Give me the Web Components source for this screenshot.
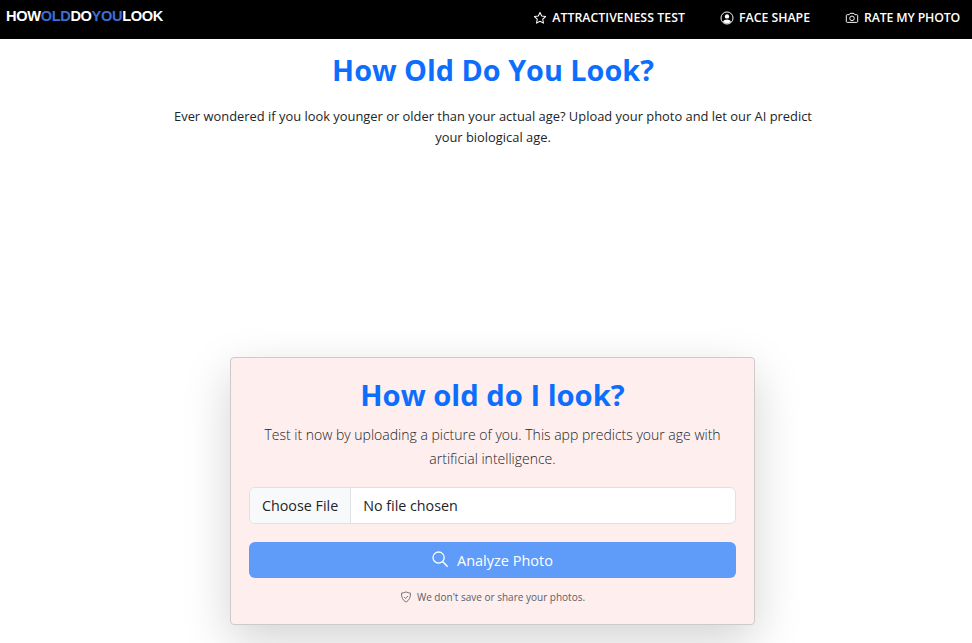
<!DOCTYPE html>
<html lang="en">
<head>
<meta charset="utf-8">
<title>How Old Do You Look?</title>
<style>
  html, body { margin: 0; padding: 0; background: #fff; }
  body { font-family: "Open Sans", "Noto Sans", sans-serif; overflow: hidden; height: 643px; }
</style>
</head>
<body>
<site-nav>
  <nav-link icon="star" style="letter-spacing: .05px">ATTRACTIVENESS TEST</nav-link>
  <nav-link icon="person">FACE SHAPE</nav-link>
  <nav-link icon="camera" style="letter-spacing: -.15px">RATE MY PHOTO</nav-link>
</site-nav>
<page-intro heading="How Old Do You Look?">
  Ever wondered if you look younger or older than your actual age? Upload your photo and let our AI predict your biological age.
</page-intro>
<upload-card heading="How old do I look?">
  Test it now by uploading a picture of you. This app predicts your age with artificial intelligence.
</upload-card>

<script>
const ICONS = {
  star: `<path d="M8 1.6l1.95 4.1 4.45.6-3.25 3.1.8 4.5L8 11.75 4.05 13.9l.8-4.5L1.6 6.3l4.45-.6z" fill="none" stroke="currentColor" stroke-width="1.2" stroke-linejoin="round"/>`,
  person: `<circle cx="8" cy="8" r="6.9" fill="none" stroke="currentColor" stroke-width="1.1"/><circle cx="8" cy="6.2" r="2.5" fill="currentColor"/><path d="M3.4 12.4C4.2 10.6 6 9.8 8 9.8s3.800.8 4.600 2.600A6.300 6.300 0 0 1 8 14.400a6.300 6.300 0 0 1-4.600-2z" fill="currentColor"/>`,
  camera: `<path d="M1.500 5.200c0-.6.500-1 1-1h2.300l1-1.500h4.400l1 1.500h2.300c.5 0 1 .4 1 1v6.800c0 .6-.5 1-1 1h-11c-.5 0-1-.4-1-1z" fill="none" stroke="currentColor" stroke-width="1.100" stroke-linejoin="round"/><circle cx="8" cy="8.400" r="2.600" fill="none" stroke="currentColor" stroke-width="1.100"/>`
};

class SiteNav extends HTMLElement {
  constructor() {
    super();
    this.attachShadow({ mode: "open" }).innerHTML = `
      <style>
        :host { display: flex; align-items: center; justify-content: space-between; height: 39px; background: #000; padding: 0 12px 0 6px; }
        .brand { font: bold 14.600px/1 "Liberation Sans", Arial, sans-serif; letter-spacing: -0.35px; color: #fff; position: relative; top: -3px; }
        .brand span { color: #3b6fd4; }
        .links { display: flex; gap: 35px; padding-bottom: 3px; }
      </style>
      <div class="brand">HOW<span>OLD</span>DO<span>YOU</span>LOOK</div>
      <div class="links"><slot></slot></div>`;
  }
}

class NavLink extends HTMLElement {
  constructor() {
    super();
    this.attachShadow({ mode: "open" }).innerHTML = `
      <style>
        :host { display: inline-flex; align-items: center; gap: 5px; color: #fff; font: 600 12.300px/1 "Open Sans", sans-serif; white-space: nowrap; }
        svg { width: 14px; height: 14px; display: block; }
      </style>
      <svg viewBox="0 0 16 16">${ICONS[this.getAttribute("icon")]}</svg><slot></slot>`;
  }
}

class PageIntro extends HTMLElement {
  constructor() {
    super();
    this.attachShadow({ mode: "open" }).innerHTML = `
      <style>
        :host { display: block; text-align: center; padding-left: 14px; }
        h1 { margin: 0; padding-top: 11px; font: 700 28.800px/40px "Open Sans", sans-serif; color: #0d6efd; }
        p { margin: 16px auto 0; width: 650px; font: 400 12.900px/21px "Open Sans", sans-serif; color: #212529; }
      </style>
      <h1>${this.getAttribute("heading")}</h1>
      <p><slot></slot></p>`;
  }
}

class UploadCard extends HTMLElement {
  constructor() {
    super();
    this.attachShadow({ mode: "open" }).innerHTML = `
      <style>
        :host { display: block; box-sizing: border-box; width: 525px; height: 268px; margin: 209px auto 0 230px; padding: 18px 18px 0; background: #feeeee; border: 1px solid #cfcaca; border-radius: 4px; box-shadow: 0 1rem 3rem rgba(0,0,0,.175); text-align: center; }
        h2 { margin: 0; font: 700 29.200px/38px "Open Sans", sans-serif; color: #0d6efd; }
        p { margin: 9px 0 0; font: 300 14px/24px "Open Sans", sans-serif; color: #212529; }
        .file { display: flex; align-items: stretch; height: 37px; margin-top: 16px; box-sizing: border-box; background: #fff; border: 1px solid #e4dfe2; border-radius: 6px; overflow: hidden; font: 400 14.300px/35px "Open Sans", sans-serif; color: #212529; text-align: left; }
        .file b { font-weight: 400; padding: 0 12px; background: #f8f9fa; border-right: 1px solid #dee2e6; }
        .file span { padding: 0 12px; }
        button { display: flex; align-items: center; justify-content: center; gap: 9px; width: 100%; height: 36px; margin-top: 18px; padding: 0; border: 0; border-radius: 6px; background: #5f9bf9; color: #fff; opacity: 1; font: 400 14.500px "Open Sans", sans-serif; }
        button svg { width: 16px; height: 16px; position: relative; top: -1px; }
        small { display: flex; align-items: center; justify-content: center; gap: 5px; margin-top: 12px; font: 400 10px/14px "Open Sans", sans-serif; color: #5c6066; }
        small svg { width: 12px; height: 12px; }
      </style>
      <h2>${this.getAttribute("heading")}</h2>
      <p><slot></slot></p>
      <label class="file"><b>Choose File</b><span>No file chosen</span></label>
      <button type="button">
        <svg viewBox="0 0 16 16"><circle cx="6.600" cy="6.600" r="5.600" fill="none" stroke="currentColor" stroke-width="1.300"/><path d="M10.800 10.800L15.200 15.200" stroke="currentColor" stroke-width="1.500" stroke-linecap="round"/></svg>
        Analyze Photo
      </button>
      <small>
        <svg viewBox="0 0 16 16"><path d="M8 1.200c1.800 1 3.900 1.500 6 1.600.2 5.600-1.800 9.900-6 12-4.200-2.100-6.200-6.400-6-12 2.100-.1 4.200-.6 6-1.600z" fill="none" stroke="#5c6066" stroke-width="1.100" stroke-linejoin="round"/><path d="M5.400 8l2 2 3.300-3.400" fill="none" stroke="#5c6066" stroke-width="1.100"/></svg>
        We don't save or share your photos.
      </small>`;
  }
}

customElements.define("site-nav", SiteNav);
customElements.define("nav-link", NavLink);
customElements.define("page-intro", PageIntro);
customElements.define("upload-card", UploadCard);
</script>
</body>
</html>
